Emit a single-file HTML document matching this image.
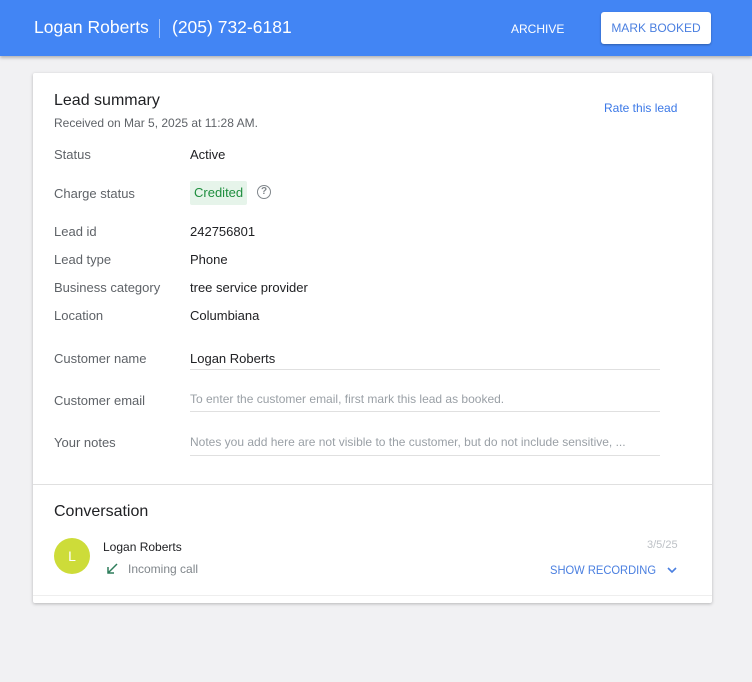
<!DOCTYPE html>
<html><head><meta charset="utf-8"><style>
*{box-sizing:border-box;margin:0;padding:0}
body{width:752px;height:682px;background:#f1f1f3;font-family:"Liberation Sans",sans-serif;position:relative;overflow:hidden;color:#202124}
.top{position:absolute;left:0;top:0;width:752px;height:56px;background:#4285f4;box-shadow:0 2px 3px rgba(0,0,0,.25)}
.t{position:absolute;color:#fff}
.card{position:absolute;left:33px;top:73px;width:679px;height:530px;background:#fff;box-shadow:0 1px 3px rgba(0,0,0,.25);border-radius:2px}
.a{position:absolute;font-size:13px}
.l{color:#5f6368;left:21px}
.v{left:157px;color:#202124}
.line{position:absolute;left:157px;width:470px;height:1px;background:#e0e0e0}
</style></head><body>
<div class="top">
<div class="t" style="left:34px;top:17px;font-size:17.5px">Logan Roberts</div>
<div style="position:absolute;left:159px;top:19px;width:1px;height:19px;background:rgba(255,255,255,.5)"></div>
<div class="t" style="left:172px;top:17px;font-size:17.5px">(205) 732-6181</div>
<div class="t" style="left:511px;top:22px;font-size:12px;font-weight:500">ARCHIVE</div>
<div style="position:absolute;left:601px;top:12px;width:110px;height:32px;background:#fff;border-radius:3px;box-shadow:0 1px 2px rgba(0,0,0,.3);color:#4a7fe0;font-size:12px;text-align:center;line-height:32px">MARK BOOKED</div>
</div>
<div class="card">
<div class="a" style="left:21px;top:19px;font-size:16px;font-weight:500">Lead summary</div>
<div class="a" style="left:21px;top:43px;font-size:12px;color:#5f6368">Received on Mar 5, 2025 at 11:28 AM.</div>
<div class="a" style="left:571px;top:28px;font-size:12px;color:#3b78e7">Rate this lead</div>
<div class="a l" style="top:74px">Status</div><div class="a v" style="top:74px">Active</div>
<div class="a l" style="top:113px">Charge status</div>
<div class="a" style="left:157px;top:108px;height:24px;line-height:24px;padding:0 4px;background:#e6f4ea;color:#1e8e3e;border-radius:2px">Credited</div>
<div style="position:absolute;left:224px;top:112px;width:14px;height:14px;border:1.5px solid #80868b;border-radius:50%;font-size:10px;line-height:11px;text-align:center;color:#80868b;font-weight:bold">?</div>
<div class="a l" style="top:151px">Lead id</div><div class="a v" style="top:151px">242756801</div>
<div class="a l" style="top:179px">Lead type</div><div class="a v" style="top:179px">Phone</div>
<div class="a l" style="top:207px">Business category</div><div class="a v" style="top:207px">tree service provider</div>
<div class="a l" style="top:235px">Location</div><div class="a v" style="top:235px">Columbiana</div>
<div class="a l" style="top:278px">Customer name</div><div class="a v" style="top:278px">Logan Roberts</div>
<div class="line" style="top:296px"></div>
<div class="a l" style="top:320px">Customer email</div><div class="a v" style="top:319px;color:#9aa0a6;font-size:12px">To enter the customer email, first mark this lead as booked.</div>
<div class="line" style="top:338px"></div>
<div class="a l" style="top:362px">Your notes</div><div class="a v" style="top:362px;color:#9aa0a6;font-size:12px">Notes you add here are not visible to the customer, but do not include sensitive, ...</div>
<div class="line" style="top:382px"></div>
<div style="position:absolute;left:0;top:411px;width:679px;height:1px;background:#e0e0e0"></div>
<div class="a" style="left:21px;top:430px;font-size:16px;font-weight:500">Conversation</div>
<div style="position:absolute;left:21px;top:465px;width:36px;height:36px;border-radius:50%;background:#cddc39;color:#fff;text-align:center;line-height:36px;font-size:14px">L</div>
<div class="a" style="left:70px;top:467px;font-size:12px">Logan Roberts</div>
<svg style="position:absolute;left:72px;top:489px" width="14" height="14" viewBox="0 0 14 14"><path d="M12 2L3 11M3 5V11H9" stroke="#2e7d5b" stroke-width="1.5" fill="none"/></svg>
<div class="a" style="left:95px;top:489px;font-size:12px;color:#80868b">Incoming call</div>
<div class="a" style="left:614px;top:466px;font-size:11px;color:#bdc1c6">3/5/25</div>
<div class="a" style="left:517px;top:490px;font-size:12px;color:#4a7fe0;transform:scaleX(.93);transform-origin:left">SHOW RECORDING</div>
<svg style="position:absolute;left:633px;top:492px" width="12" height="10" viewBox="0 0 12 10"><path d="M2 3L6 7L10 3" stroke="#4a7fe0" stroke-width="1.6" fill="none"/></svg>
<div style="position:absolute;left:0;top:522px;width:679px;height:1px;background:#eee"></div>
</div>
</body></html>
